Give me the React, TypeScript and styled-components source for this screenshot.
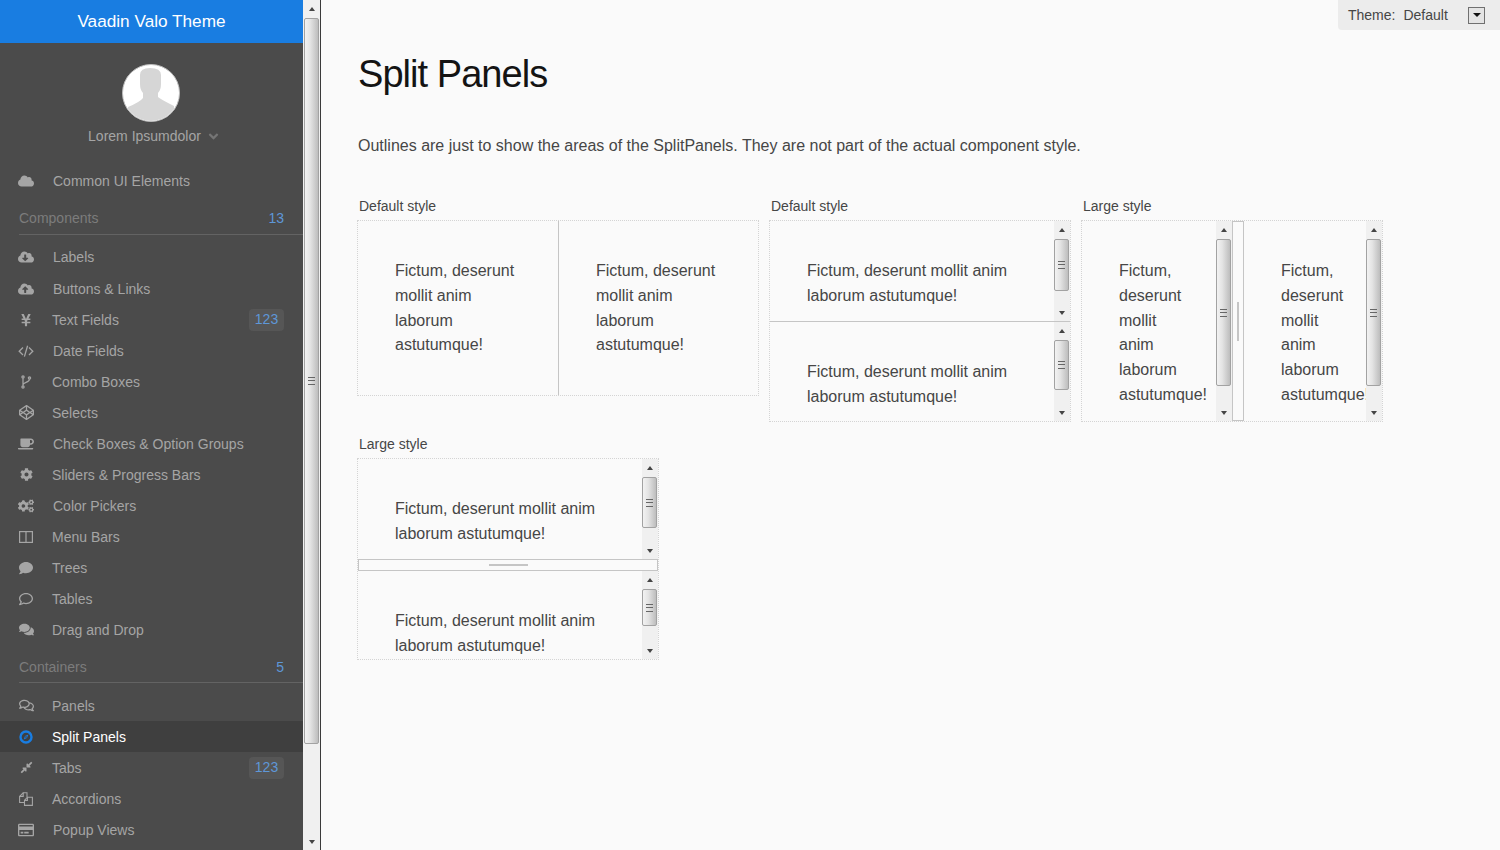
import styled, { createGlobalStyle } from 'styled-components';
import type { ReactNode } from 'react';
import {
  FaAngleDown, FaCloud, FaCloudDownloadAlt, FaCloudUploadAlt, FaYenSign,
  FaCodepen, FaCoffee, FaCog, FaCogs, FaComment, FaRegComment, FaComments, FaRegComments,
  FaCompressAlt, FaRegCreditCard,
} from 'react-icons/fa';

const GlobalStyle = createGlobalStyle`
  html, body { margin: 0; padding: 0; height: 100%; overflow: hidden; }
  body { font-family: "Liberation Sans", Arial, sans-serif; font-size: 16px; color: #464646; background: #fafafa; }
`;

const Page = styled.div`
  display: flex;
  height: 850px;
  overflow: hidden;
  position: relative;
`;

const Sidebar = styled.nav`
  width: 303px;
  flex: none;
  background: #4b4b4b;
  overflow: hidden;
  font-size: 14px;
  color: #a5a5a5;
`;

const Brand = styled.div`
  height: 43px;
  background: #197de1;
  color: #fff;
  font-size: 17.2px;
  line-height: 43px;
  text-align: center;
`;

const UserBlock = styled.div`
  display: flex;
  flex-direction: column;
  align-items: center;
  padding-top: 21px;
  height: 122px;
  box-sizing: border-box;
`;

const Avatar = styled.svg`
  width: 58px;
  height: 58px;
  display: block;
  margin-right: 2px;
`;

const UserName = styled.div`
  display: flex;
  align-items: center;
  gap: 5px;
  margin-top: 6px;
  padding-left: 6px;
  line-height: 17px;
  svg { color: #757575; width: 15px; height: 15px; }
`;

const SectionHeader = styled.div<{ $tight?: boolean }>`
  display: flex;
  justify-content: space-between;
  margin: 6px 0 ${({ $tight }) => ($tight ? 7 : 6)}px 19px;
  padding: 8px 19px ${({ $tight }) => ($tight ? 7 : 8)}px 0;
  line-height: 16px;
  color: #7c7c7c;
  border-bottom: 1px solid #636363;
  span { color: #5e97d8; }
`;

const Row = styled.div<{ $tall?: boolean; $active?: boolean }>`
  display: flex;
  align-items: center;
  height: ${({ $tall }) => ($tall ? 32 : 31)}px;
  padding: 0 19px 0 18px;
  background: ${({ $active }) => ($active ? '#3f3f3f' : 'transparent')};
  color: ${({ $active }) => ($active ? '#fff' : 'inherit')};
`;

const IconSlot = styled.span<{ $wide?: boolean; $active?: boolean; $size: number }>`
  display: flex;
  align-items: center;
  width: ${({ $wide }) => ($wide ? 35 : 34)}px;
  flex: none;
  color: ${({ $active }) => ($active ? '#197de1' : '#a5a5a5')};
  svg {
    width: ${({ $size }) => $size}px;
    height: ${({ $size }) => $size}px;
    margin-left: ${({ $size }) => (16 - $size) / 2}px;
    display: block;
  }
`;

const RowLabel = styled.span`
  flex: 1;
`;

const Badge = styled.span`
  width: 35px;
  height: 22px;
  line-height: 21px;
  text-align: center;
  border-radius: 4px;
  background: #565656;
  color: #5e97d8;
`;

const PageScrollbar = styled.div`
  width: 17px;
  flex: none;
  border-right: 1px solid #3a3a3a;
`;

const Main = styled.main`
  flex: 1;
  min-width: 0;
  padding: 0 37px;
  background: #fafafa;
`;

const Title = styled.h1`
  margin: 52px 0 0;
  font-size: 38px;
  font-weight: 400;
  line-height: 45px;
  letter-spacing: -0.025em;
  color: #141414;
`;

const Intro = styled.p`
  margin: 36px 0 0;
  line-height: 25px;
`;

const Demos = styled.div`
  display: flex;
  flex-wrap: wrap;
  align-items: flex-start;
  column-gap: 10px;
  row-gap: 14px;
  margin-top: 40px;
  margin-left: -1px;
`;

const Demo = styled.section``;

const DemoLabel = styled.div`
  font-size: 14px;
  line-height: 17px;
  margin: 0 0 5px 2px;
`;

const Outline = styled.div<{ $w: number; $h: number; $vertical?: boolean }>`
  display: flex;
  flex-direction: ${({ $vertical }) => ($vertical ? 'column' : 'row')};
  width: ${({ $w }) => $w}px;
  height: ${({ $h }) => $h}px;
  box-sizing: border-box;
  border: 1px dotted #d4d4d4;
`;

const Pane = styled.div<{ $size?: number }>`
  display: flex;
  flex: ${({ $size }) => ($size ? `0 0 ${$size}px` : '1 1 0')};
  min-width: 0;
  min-height: 0;
  overflow: hidden;
`;

const PaneText = styled.div`
  flex: 1;
  min-width: 0;
  padding: 38px 37px 37px;
  line-height: 24.8px;
  overflow: hidden;
  box-sizing: border-box;
`;

const Divider = styled.div<{ $vertical?: boolean }>`
  flex: none;
  background: #c5c5c5;
  ${({ $vertical }) => ($vertical ? 'height: 1px;' : 'width: 1px;')}
`;

const LargeSplitter = styled.div<{ $vertical?: boolean }>`
  flex: none;
  display: flex;
  align-items: center;
  justify-content: center;
  box-sizing: border-box;
  background: #fafafa;
  border: 1px solid #c5c5c5;
  ${({ $vertical }) => ($vertical ? 'height: 12px;' : 'width: 12px;')}
  &::after {
    content: '';
    background: #c5c5c5;
    ${({ $vertical }) => ($vertical ? 'width: 39px; height: 2px;' : 'width: 2px; height: 39px;')}
  }
`;

const Thumb = styled.div<{ $h: number }>`
  flex: 0 0 ${({ $h }) => $h}px;
  margin: 1px 1px 0 0;
  box-sizing: border-box;
  display: flex;
  align-items: center;
  justify-content: center;
  border: 1px solid #a2a2a2;
  border-radius: 2px;
  background: linear-gradient(to right, #f2f2f2 0%, #e4e4e4 40%, #bdbdbd 100%);
`;

const Track = styled.div`
  flex: 0 0 16px;
  display: flex;
  flex-direction: column;
  align-items: stretch;
  background: #f0f0f0;
`;

const PageTrack = styled(Track)`
  height: 850px;
  ${Thumb} { margin: 1px 1px 0 1px; }
`;

const ArrowButton = styled.div<{ $down?: boolean }>`
  flex: 0 0 17px;
  display: flex;
  align-items: center;
  justify-content: center;
  &::after {
    content: '';
    border-left: 3.5px solid transparent;
    border-right: 3.5px solid transparent;
    ${({ $down }) => ($down ? 'border-top: 4px solid #444;' : 'border-bottom: 4px solid #444;')}
  }
`;

const Grip = styled.div`
  width: 7px;
  height: 8px;
  border-top: 1px solid #666;
  border-bottom: 1px solid #666;
  box-sizing: border-box;
  position: relative;
  &::after {
    content: '';
    position: absolute;
    left: 0;
    right: 0;
    top: 2px;
    height: 1px;
    background: #666;
  }
`;

const Spacer = styled.div`
  flex: 1;
`;

const ThemePicker = styled.div`
  position: absolute;
  top: 0;
  right: 0;
  width: 162px;
  height: 30px;
  padding: 0 15px 0 10px;
  box-sizing: border-box;
  display: flex;
  align-items: center;
  font-size: 14px;
  background: #ececec;
  border-bottom-left-radius: 4px;
`;

const ThemeLabel = styled.span`
  margin-right: 8px;
`;

const ThemeValue = styled.span`
  flex: 1;
`;

const ThemeButton = styled.div`
  width: 17px;
  height: 17px;
  box-sizing: border-box;
  border: 1px solid #707070;
  background: #e4e4e4;
  display: flex;
  align-items: center;
  justify-content: center;
  &::after {
    content: '';
    border-left: 4px solid transparent;
    border-right: 4px solid transparent;
    border-top: 4px solid #111;
  }
`;

const CodeIcon = () => (
  <svg viewBox="0 0 16 16" fill="none" stroke="currentColor" strokeWidth="1.3">
    <path d="M5 4.5L1.2 8.2L5 12M11 4.5L14.8 8.2L11 12M9.6 2.8L6.4 13.6" />
  </svg>
);

const ForkIcon = () => (
  <svg viewBox="0 0 14 14" fill="none" stroke="currentColor" strokeWidth="1.3">
    <circle cx="4" cy="2" r="1.1" />
    <circle cx="4" cy="12" r="1.1" />
    <circle cx="10.5" cy="3" r="1.1" />
    <path d="M4 3.2v7.6M10.5 4.2c0 3.4-6.5 2.8-6.5 5.6" />
  </svg>
);

const ColumnsIcon = () => (
  <svg viewBox="0 0 14 14" fill="none" stroke="currentColor" strokeWidth="1.2">
    <rect x="0.6" y="1.6" width="12.8" height="10.8" />
    <path d="M7 1.6v10.8" />
  </svg>
);

const CompassIcon = () => (
  <svg viewBox="0 0 14 14" fill="none" stroke="currentColor">
    <circle cx="7" cy="7" r="5.5" strokeWidth="2.4" />
    <path d="M9.4 4.4L8 8L4.7 9.6L6 6z" fill="currentColor" stroke="none" />
    <circle cx="7" cy="7" r="0.8" fill="#3f3f3f" stroke="none" />
  </svg>
);

const CopyIcon = () => (
  <svg viewBox="0 0 14 14" fill="none" stroke="currentColor" strokeWidth="1.1">
    <path d="M5.5 10.5H0.6V4.4L4.2 0.8H8V5" />
    <path d="M4.2 0.8V4.4H0.6" />
    <path d="M5.5 8.4L8.4 5.2H13.4V13.4H5.5z" />
    <path d="M8.4 5.2V8.4H5.5" />
  </svg>
);

const AvatarIcon = () => (
  <Avatar viewBox="0 0 58 58">
    <defs>
      <clipPath id="avatar-clip">
        <circle cx="29" cy="29" r="28" />
      </clipPath>
    </defs>
    <circle cx="29" cy="29" r="28.5" fill="#fff" stroke="#bdbdbd" />
    <path
      clipPath="url(#avatar-clip)"
      fill="#d6d6d6"
      d="M18 11Q18 4 28 4Q39 4 39 11L39 20Q39 26 36 29L36 33Q38 35 52 42L52 58L4 58L6 43Q18 38 21 34L21 29Q18 26 18 20Z"
    />
  </Avatar>
);

type Item = {
  icon: ReactNode;
  label: string;
  badge?: string;
  tall?: boolean;
  wide?: boolean;
  active?: boolean;
  size?: number;
};

const components: Item[] = [
  { icon: <FaCloudDownloadAlt />, label: 'Labels', tall: true, wide: true, size: 16 },
  { icon: <FaCloudUploadAlt />, label: 'Buttons & Links', wide: true, size: 16 },
  { icon: <FaYenSign />, label: 'Text Fields', badge: '123' },
  { icon: <CodeIcon />, label: 'Date Fields', wide: true, size: 16 },
  { icon: <ForkIcon />, label: 'Combo Boxes' },
  { icon: <FaCodepen />, label: 'Selects', size: 15 },
  { icon: <FaCoffee />, label: 'Check Boxes & Option Groups', wide: true, size: 16 },
  { icon: <FaCog />, label: 'Sliders & Progress Bars', size: 13 },
  { icon: <FaCogs />, label: 'Color Pickers', wide: true, size: 16 },
  { icon: <ColumnsIcon />, label: 'Menu Bars' },
  { icon: <FaComment />, label: 'Trees' },
  { icon: <FaRegComment />, label: 'Tables' },
  { icon: <FaComments />, label: 'Drag and Drop', size: 15 },
];

const containers: Item[] = [
  { icon: <FaRegComments />, label: 'Panels', size: 15 },
  { icon: <CompassIcon />, label: 'Split Panels', active: true },
  { icon: <FaCompressAlt />, label: 'Tabs', badge: '123', size: 13 },
  { icon: <CopyIcon />, label: 'Accordions' },
  { icon: <FaRegCreditCard />, label: 'Popup Views', wide: true, size: 16 },
];

const NavRow = ({ item }: { item: Item }) => (
  <Row $tall={item.tall} $active={item.active}>
    <IconSlot $wide={item.wide} $active={item.active} $size={item.size ?? 14}>{item.icon}</IconSlot>
    <RowLabel>{item.label}</RowLabel>
    {item.badge && <Badge>{item.badge}</Badge>}
  </Row>
);

const FakeScrollbar = ({ thumb }: { thumb: number }) => (
  <Track>
    <ArrowButton />
    <Thumb $h={thumb}><Grip /></Thumb>
    <Spacer />
    <ArrowButton $down />
  </Track>
);

const TEXT = 'Fictum, deserunt mollit anim laborum astutumque!';

const ScrollPane = ({ size, thumb }: { size?: number; thumb?: number }) => (
  <Pane $size={size}>
    <PaneText>{TEXT}</PaneText>
    {thumb && <FakeScrollbar thumb={thumb} />}
  </Pane>
);

export default function App() {
  return (
    <Page>
      <GlobalStyle />
      <Sidebar>
        <Brand>Vaadin Valo Theme</Brand>
        <UserBlock>
          <AvatarIcon />
          <UserName>Lorem Ipsumdolor <FaAngleDown /></UserName>
        </UserBlock>
        <NavRow item={{ icon: <FaCloud />, label: 'Common UI Elements', wide: true, size: 16 }} />
        <SectionHeader>Components <span>13</span></SectionHeader>
        {components.map((item) => <NavRow key={item.label} item={item} />)}
        <SectionHeader $tight>Containers <span>5</span></SectionHeader>
        {containers.map((item) => <NavRow key={item.label} item={item} />)}
      </Sidebar>
      <PageScrollbar>
        <PageTrack>
          <ArrowButton />
          <Thumb $h={726}><Grip /></Thumb>
          <Spacer />
          <ArrowButton $down />
        </PageTrack>
      </PageScrollbar>
      <Main>
        <Title>Split Panels</Title>
        <Intro>Outlines are just to show the areas of the SplitPanels. They are not part of the actual component style.</Intro>
        <Demos>
          <Demo>
            <DemoLabel>Default style</DemoLabel>
            <Outline $w={402} $h={176}>
              <ScrollPane size={200} />
              <Divider />
              <ScrollPane />
            </Outline>
          </Demo>
          <Demo>
            <DemoLabel>Default style</DemoLabel>
            <Outline $w={302} $h={202} $vertical>
              <ScrollPane size={100} thumb={52} />
              <Divider $vertical />
              <ScrollPane thumb={50} />
            </Outline>
          </Demo>
          <Demo>
            <DemoLabel>Large style</DemoLabel>
            <Outline $w={302} $h={202}>
              <ScrollPane size={150} thumb={147} />
              <LargeSplitter />
              <ScrollPane thumb={147} />
            </Outline>
          </Demo>
          <Demo>
            <DemoLabel>Large style</DemoLabel>
            <Outline $w={302} $h={202} $vertical>
              <ScrollPane size={100} thumb={51} />
              <LargeSplitter $vertical />
              <ScrollPane thumb={37} />
            </Outline>
          </Demo>
        </Demos>
      </Main>
      <ThemePicker>
        <ThemeLabel>Theme:</ThemeLabel>
        <ThemeValue>Default</ThemeValue>
        <ThemeButton />
      </ThemePicker>
    </Page>
  );
}
